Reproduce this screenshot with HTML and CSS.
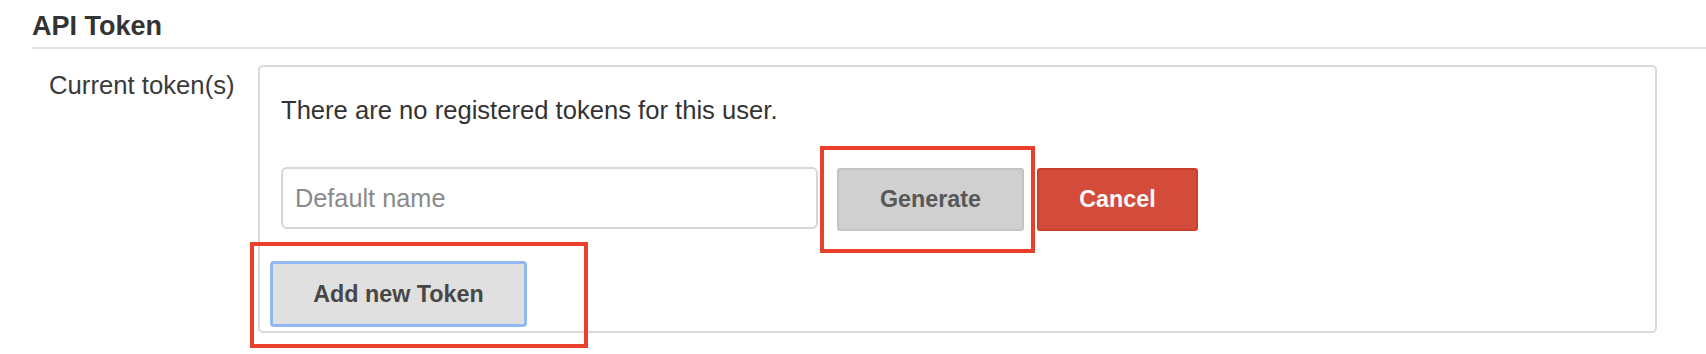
FILE: index.html
```html
<!DOCTYPE html>
<html>
<head>
<meta charset="utf-8">
<link rel="stylesheet" href="styles.css">
</head>
<body>
<div class="page">
  <section class="section">
    <h2 class="section-title">API Token</h2>
    <div class="field-row">
      <div class="field-label">Current token(s)</div>
      <div class="token-box">
        <div class="token-inner">
          <p class="token-message">There are no registered tokens for this user.</p>
          <div class="new-token-row">
            <input class="token-name" type="text" placeholder="Default name">
            <button class="btn btn-generate" type="button">Generate</button>
            <button class="btn btn-cancel" type="button">Cancel</button>
          </div>
        </div>
        <button class="btn btn-add" type="button">Add new Token</button>
      </div>
    </div>
  </section>
  <div class="mark mark-generate"></div>
  <div class="mark mark-add"></div>
</div>
</body>
</html>
```

FILE: styles.css
```css
html, body {
  margin: 0;
  padding: 0;
  background: #ffffff;
}

body {
  font-family: "Liberation Sans", Arial, sans-serif;
  color: #333333;
}

.page {
  position: relative;
  width: 1706px;
  height: 354px;
  overflow: hidden;
}

.section {
  padding-left: 32px;
}

.section-title {
  margin: 11px 0 0 0;
  font-size: 27px;
  line-height: 30px;
  font-weight: bold;
  color: #333333;
  padding-bottom: 6px;
  border-bottom: 2px solid #e2e2e2;
}

.field-row {
  display: flex;
  align-items: flex-start;
  margin-top: 16px;
}

.field-label {
  width: 209px;
  padding-left: 17px;
  padding-top: 5px;
  font-size: 25.7px;
  line-height: 30px;
  color: #3a3a3a;
}

.token-box {
  width: 1385px;
  height: 264px;
  border: 2px solid #d9d9d9;
  border-radius: 5px;
  padding-left: 10px;
  box-sizing: content-box;
}

.token-inner {
  padding-left: 11px;
}

.token-message {
  margin: 0;
  padding-top: 28px;
  font-size: 25.6px;
  line-height: 30px;
  color: #333333;
}

.new-token-row {
  display: flex;
  align-items: flex-start;
  margin-top: 42px;
}

.token-name {
  width: 537px;
  height: 62px;
  box-sizing: border-box;
  border: 2px solid #d6d6d6;
  border-radius: 6px;
  padding: 0 12px;
  font-family: "Liberation Sans", Arial, sans-serif;
  font-size: 25.3px;
  color: #333333;
  outline: none;
  margin: 0;
}

.token-name::placeholder {
  color: #8a8a8a;
}

.btn {
  display: flex;
  align-items: center;
  justify-content: center;
  box-sizing: border-box;
  margin: 0;
  padding: 0;
  font-family: "Liberation Sans", Arial, sans-serif;
  font-weight: bold;
  font-size: 23.3px;
  border-radius: 3px;
  cursor: pointer;
}

.btn-generate {
  margin-left: 19px;
  margin-top: 1px;
  width: 187px;
  height: 63px;
  background: #d0d0d0;
  border: 2px solid #c3c3c3;
  color: #575757;
}

.btn-cancel {
  margin-left: 13px;
  margin-top: 1px;
  width: 161px;
  height: 63px;
  background: #d34b3a;
  border: 2px solid #c8412f;
  color: #fafafa;
}

.btn-add {
  margin-top: 30px;
  width: 257px;
  height: 66px;
  background: #e0e0e0;
  border: 3px solid #92b8f3;
  border-radius: 4px;
  color: #474747;
}

.mark {
  position: absolute;
  box-sizing: border-box;
  border: 4px solid #e8402a;
}

.mark-generate {
  left: 820px;
  top: 146px;
  width: 215px;
  height: 107px;
}

.mark-add {
  left: 250px;
  top: 242px;
  width: 338px;
  height: 106px;
}
```
